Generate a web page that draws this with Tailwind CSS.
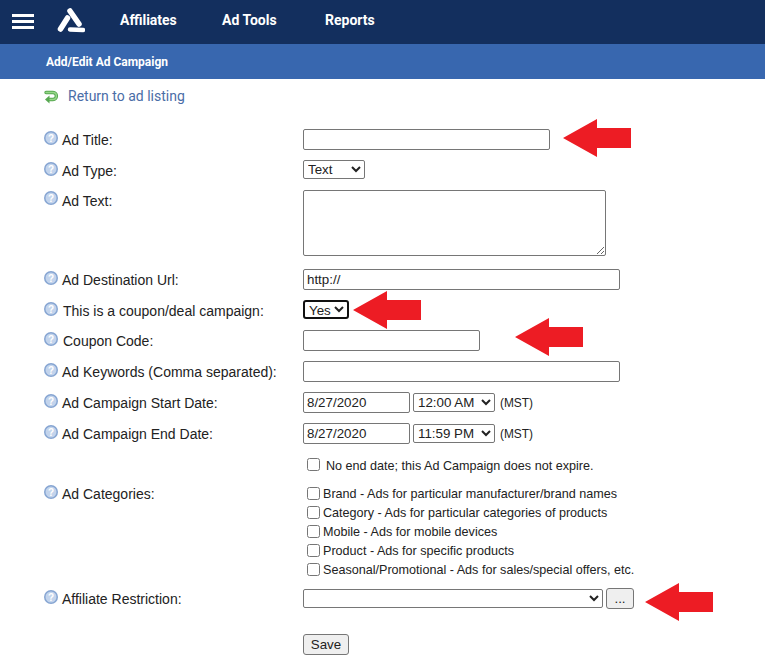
<!DOCTYPE html>
<html lang="en">
  <head>
    <meta charset="UTF-8" />
    <title>Add/Edit Ad Campaign</title>
    <script src="https://cdn.jsdelivr.net/npm/@tailwindcss/browser@4"></script>
  </head>
  <body class="relative overflow-hidden bg-white font-['Liberation_Sans',sans-serif] text-[14px] text-[#222]">
    <!-- shared icons -->
    <svg class="hidden">
      <defs>
        <radialGradient id="help-fill" cx="50%" cy="35%" r="65%">
          <stop offset="0%" stop-color="#7393c8" />
          <stop offset="100%" stop-color="#466aa6" />
        </radialGradient>
      </defs>
      <symbol id="help" viewBox="0 0 14 14">
        <circle cx="7" cy="7" r="7" fill="#86a5d2" />
        <circle cx="7" cy="7" r="5.5" fill="#c3d4ec" />
        <circle cx="7" cy="7" r="4.7" fill="url(#help-fill)" />
        <text x="7" y="10.5" text-anchor="middle" font-size="10" font-weight="700" font-family="Liberation Sans" fill="#fff">?</text>
      </symbol>
      <symbol id="arrow" viewBox="0 0 68 38">
        <path d="M0 19 L34 0 V9 H68 V29 H34 V38 Z" fill="#ed1c24" />
      </symbol>
    </svg>

    <!-- top nav -->
    <nav class="flex h-11 items-center bg-[#132f5e] text-white">
      <div class="mb-px ml-3 flex w-[22px] flex-col gap-[3px]">
        <span class="h-[3px] bg-white"></span>
        <span class="h-[3px] bg-white"></span>
        <span class="h-[3px] bg-white"></span>
      </div>
      <svg class="mt-[-4px] ml-[23px] h-[28px] w-[28px]" viewBox="0 0 28 28" fill="none" stroke="white" stroke-linecap="round">
        <path d="M13 5 L22 18" stroke-width="5.5" />
        <path d="M10.5 12 L3.5 23" stroke-width="5.5" />
        <path d="M13 23.5 L26 24" stroke-width="4.5" />
      </svg>
      <div class="mb-1 ml-[35px] flex font-['Roboto',sans-serif] text-[14px] font-bold">
        <a class="w-[102px]">Affiliates</a>
        <a class="w-[103px]">Ad Tools</a>
        <a>Reports</a>
      </div>
    </nav>
    <div class="flex h-[35px] items-center bg-[#3867af] pl-[46px] font-['Roboto',sans-serif] text-[12px] font-bold text-white">Add/Edit Ad Campaign</div>

    <div class="flex h-[35px] items-center pl-[44px] font-['Roboto',sans-serif] text-[#4a6da7]">
      <svg class="h-[15px] w-[15px]" viewBox="0 0 15 15" fill="none">
        <path d="M2 3.5 H9 C13.5 3.5 13.5 10.5 9 10.5 H5" stroke="#57a851" stroke-width="3.4" stroke-linecap="round" />
        <path d="M2 3.5 H9 C13.5 3.5 13.5 10.5 9 10.5 H5" stroke="#96d688" stroke-width="1.4" stroke-linecap="round" />
        <path d="M5.5 6.5 L1 10.5 L5.5 14.5 Z" fill="#57a851" />
      </svg>
      <a class="ml-[9px]">Return to ad listing</a>
    </div>

    <!-- form -->
    <form class="mt-[15px] pl-[44px]">
      <div class="flex h-[31px]">
        <div class="flex w-[259px] items-start">
          <svg class="mt-[2px] h-[14px] w-[14px]"><use href="#help" /></svg>
          <label class="mt-[0.5px] ml-1">Ad Title:</label>
        </div>
        <input type="text" class="h-[21px] w-[247px] rounded-[2px] border border-[#767676] bg-white px-[3px] text-[13.33px]" />
      </div>
      <div class="flex h-[30px]">
        <div class="flex w-[259px] items-start">
          <svg class="mt-[2px] h-[14px] w-[14px]"><use href="#help" /></svg>
          <label class="mt-px ml-1">Ad Type:</label>
        </div>
        <select class="h-[19px] w-[62px] rounded-[2px] border border-[#767676] bg-white text-[13.33px]"><option>Text</option></select>
      </div>
      <div class="flex h-[79px]">
        <div class="flex w-[259px] items-start">
          <svg class="mt-px h-[14px] w-[14px]"><use href="#help" /></svg>
          <label class="mt-px ml-1">Ad Text:</label>
        </div>
        <textarea class="h-[66px] w-[303px] rounded-[2px] border border-[#767676] bg-white"></textarea>
      </div>
      <div class="flex h-[31px]">
        <div class="flex w-[259px] items-start">
          <svg class="mt-[2px] h-[14px] w-[14px]"><use href="#help" /></svg>
          <label class="mt-px ml-1">Ad Destination Url:</label>
        </div>
        <input type="text" value="http://" class="h-[21px] w-[317px] rounded-[2px] border border-[#767676] bg-white px-[3px] text-[13.33px]" />
      </div>
      <div class="flex h-[30px]">
        <div class="flex w-[259px] items-start">
          <svg class="mt-[2px] h-[14px] w-[14px]"><use href="#help" /></svg>
          <label class="mt-px ml-[5px]">This is a coupon/deal campaign:</label>
        </div>
        <select class="h-[19px] w-[46px] rounded-[3px] border-2 border-[#111] bg-white text-[13.33px]"><option>Yes</option></select>
      </div>
      <div class="flex h-[31px]">
        <div class="flex w-[259px] items-start">
          <svg class="mt-[2px] h-[14px] w-[14px]"><use href="#help" /></svg>
          <label class="mt-px ml-[5px]">Coupon Code:</label>
        </div>
        <input type="text" class="h-[21px] w-[177px] rounded-[2px] border border-[#767676] bg-white px-[3px] text-[13.33px]" />
      </div>
      <div class="flex h-[31px]">
        <div class="flex w-[259px] items-start">
          <svg class="mt-[2px] h-[14px] w-[14px]"><use href="#help" /></svg>
          <label class="mt-px ml-1">Ad Keywords (Comma separated):</label>
        </div>
        <input type="text" class="h-[21px] w-[317px] rounded-[2px] border border-[#767676] bg-white px-[3px] text-[13.33px]" />
      </div>
      <div class="flex h-[31px]">
        <div class="flex w-[259px] items-start">
          <svg class="mt-[2px] h-[14px] w-[14px]"><use href="#help" /></svg>
          <label class="mt-px ml-1">Ad Campaign Start Date:</label>
        </div>
        <input type="text" value="8/27/2020" class="h-[21px] w-[107px] rounded-[2px] border border-[#767676] bg-white px-[3px] text-[13.33px]" />
        <select class="mt-px ml-[3px] h-[19px] w-[82px] rounded-[2px] border border-[#767676] bg-white text-[13.33px]"><option>12:00 AM</option></select>
        <span class="mt-[3px] ml-[5px] text-[11.9px]">(MST)</span>
      </div>
      <div class="flex h-[31px]">
        <div class="flex w-[259px] items-start">
          <svg class="mt-[2px] h-[14px] w-[14px]"><use href="#help" /></svg>
          <label class="mt-px ml-1">Ad Campaign End Date:</label>
        </div>
        <input type="text" value="8/27/2020" class="h-[21px] w-[107px] rounded-[2px] border border-[#767676] bg-white px-[3px] text-[13.33px]" />
        <select class="mt-px ml-[3px] h-[19px] w-[82px] rounded-[2px] border border-[#767676] bg-white text-[13.33px]"><option>11:59 PM</option></select>
        <span class="mt-[3px] ml-[5px] text-[11.9px]">(MST)</span>
      </div>
      <div class="flex h-[29px] items-start pt-[3px] pl-[263px] text-[12.6px]">
        <input type="checkbox" class="mt-px" />
        <span class="ml-[6px]">No end date; this Ad Campaign does not expire.</span>
      </div>
      <div class="flex h-[105px]">
        <div class="flex w-[259px] items-start">
          <svg class="mt-[2px] h-[14px] w-[14px]"><use href="#help" /></svg>
          <label class="mt-px ml-1">Ad Categories:</label>
        </div>
        <div class="flex flex-col pt-[2px] pl-1 text-[12.6px]">
          <label class="flex h-[19px] items-start gap-[3px]"><input type="checkbox" class="mt-[2px]" />Brand - Ads for particular manufacturer/brand names</label>
          <label class="flex h-[19px] items-start gap-[3px]"><input type="checkbox" class="mt-[2px]" />Category - Ads for particular categories of products</label>
          <label class="flex h-[19px] items-start gap-[3px]"><input type="checkbox" class="mt-[2px]" />Mobile - Ads for mobile devices</label>
          <label class="flex h-[19px] items-start gap-[3px]"><input type="checkbox" class="mt-[2px]" />Product - Ads for specific products</label>
          <label class="flex h-[19px] items-start gap-[3px]"><input type="checkbox" class="mt-[2px]" />Seasonal/Promotional - Ads for sales/special offers, etc.</label>
        </div>
      </div>
      <div class="flex h-[46px]">
        <div class="flex w-[259px] items-start">
          <svg class="mt-[2px] h-[14px] w-[14px]"><use href="#help" /></svg>
          <label class="mt-px ml-1">Affiliate Restriction:</label>
        </div>
        <select class="mt-px h-[19px] w-[300px] rounded-[2px] border border-[#767676] bg-white text-[13.33px]"><option></option></select>
        <button type="button" class="ml-[3px] h-[21px] w-[28px] rounded-[3px] border border-[#767676] bg-[#efefef] text-[13.33px]">...</button>
      </div>
      <div class="pl-[259px]">
        <button type="button" class="h-[21px] w-[46px] rounded-[3px] border border-[#767676] bg-[#efefef] text-[13.33px]">Save</button>
      </div>
    </form>

    <!-- annotation arrows -->
    <svg class="absolute top-[119px] left-[563px] h-[38px] w-[68px]"><use href="#arrow" /></svg>
    <svg class="absolute top-[291px] left-[353px] h-[38px] w-[68px]"><use href="#arrow" /></svg>
    <svg class="absolute top-[318px] left-[515px] h-[38px] w-[68px]"><use href="#arrow" /></svg>
    <svg class="absolute top-[583px] left-[645px] h-[38px] w-[68px]"><use href="#arrow" /></svg>
  </body>
</html>
